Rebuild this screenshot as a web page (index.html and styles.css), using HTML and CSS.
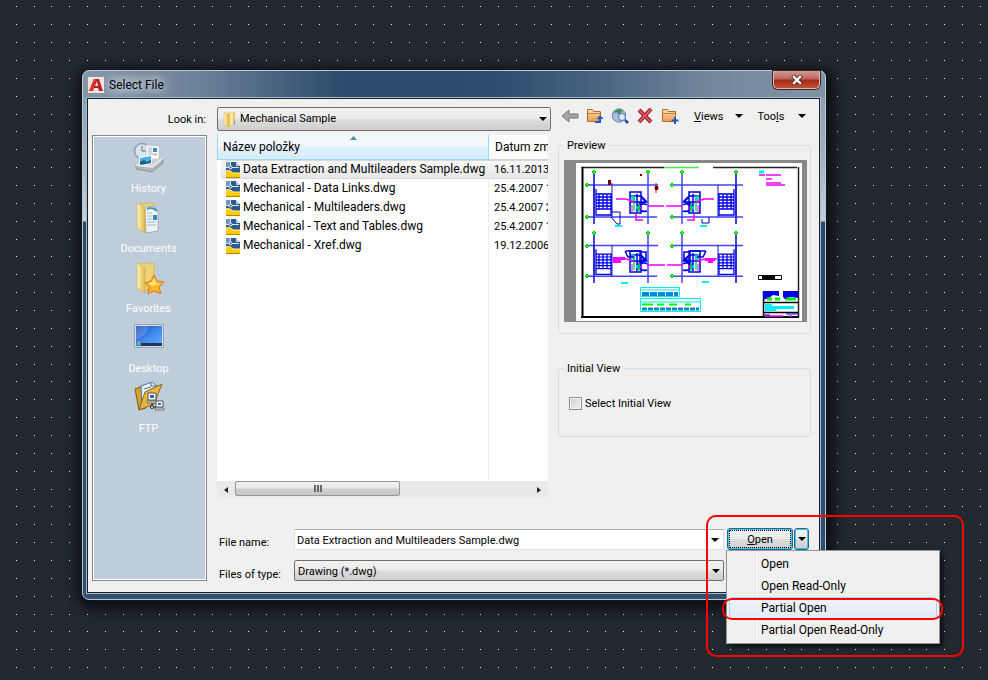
FILE: index.html
```
<!DOCTYPE html>
<html lang="en">
<head>
    <meta charset="UTF-8">
    <meta name="viewport" content="width=device-width, initial-scale=1.0">
    <title>Select File</title>
    <link rel="stylesheet" href="styles.css">
</head>
<body>
    <!-- Shared icons and drawing blocks -->
    <svg class="defs" aria-hidden="true">
        <defs>
            <linearGradient id="gold" x1="0" y1="0" x2="1" y2="0"><stop offset="0" stop-color="#fff6b8"/><stop offset="1" stop-color="#dfb64a"/></linearGradient>
            <linearGradient id="orange" x1="0" y1="0" x2="0" y2="1"><stop offset="0" stop-color="#ffe0b0"/><stop offset="1" stop-color="#ee9a4a"/></linearGradient>
            <linearGradient id="screen" x1="0" y1="0" x2="1" y2="1"><stop offset="0" stop-color="#1647b8"/><stop offset=".5" stop-color="#3f86ec"/><stop offset="1" stop-color="#5fa8fa"/></linearGradient>
            <symbol id="dwg" viewBox="0 0 14 16">
                <path d="M0 0h10l4 4v12H0z" fill="#2f5a8a"/>
                <path d="M0 0h4v5H0z" fill="#6f97bf"/>
                <path d="M10 0h4v4z" fill="#fff"/>
                <path d="M10 0v4h4z" fill="#b9d0e6"/>
                <path d="M4.500 0v4M0 5.500h3M6 5.500h7" stroke="#dbe8f4"/>
                <circle cx="4.500" cy="5.500" r="1.500" fill="#2f5a8a" stroke="#fff"/>
                <path d="M0 9c3-1 5 0 7 2h7v5H0z" fill="#fc0"/>
                <path d="M0 9c3-1 5 0 7 2h7" fill="none" stroke="#fff3b0"/>
                <path d="M0 15.500h14" stroke="#b58400"/>
            </symbol>
            <symbol id="folder" viewBox="0 0 18 16">
                <path d="M1.500 13.500v-12h5l1 2h7v10z" fill="url(#orange)" stroke="#b06a28"/>
                <path d="M2 5.500h12" stroke="#c98544"/>
            </symbol>
            <symbol id="bigfolder" viewBox="0 0 32 32">
                <path d="M5 2l16-1v25l-12 3z" fill="#edd27c" stroke="#cfa94b" stroke-width=".6"/>
            </symbol>
            <symbol id="bigfolderfront" viewBox="0 0 32 32">
                <path d="M4 1l8 5v25l-8-5z" fill="url(#gold)" stroke="#d0ac50" stroke-width=".6"/>
            </symbol>
            <g id="frame">
                <path d="M13 0v52M67 0v52M6 13h71M6 45h70" stroke="#4444ff" stroke-width="1.500"/>
                <path d="M13 2v50M13 13v31M31 13v32" stroke="#1111c8" stroke-width="1"/>
                <path d="M15 22h16M15 25h16M15 28h16M15 31h16M15 34h16M15 37h16M18 22v15M22 22v15M26 22v15M30 22v22M15 17v26h15" fill="none" stroke="#0000e8" stroke-width="1.300"/>
                <path d="M13-2l2 2-2 2-2-2zM67-2l2 2-2 2-2-2z" fill="#2f2" stroke="#0c0"/>
            </g>
            <g id="core">
                <path d="M49 20h11v21H49zM49 30h16M60 24l6 6M49 24h10l6 6c-7 0-8 3-8 5s4 5 8 4M56 22v18M66 30c-7 0-8 3-8 5 2-3 5-4 8-2M58 36c2 4 5 4 8 3" fill="none" stroke="#0000e0" stroke-width="1.500"/>
                <path d="M51 23v6M53 31v8M58 32v8" stroke="#0e4" stroke-width="1.500"/>
                <path d="M53 24v5M56 34v3" stroke="#00c8d8" stroke-width="2"/>
                <path d="M51 33v7M60 34v4" stroke="#f0f"/>
            </g>
            <path id="sidemarks" d="M2-2l2 2-2 2-2-2z" fill="#2f2" stroke="#0c0"/>
        </defs>
    </svg>

    <div class="dialog">
        <div class="titlebar">
            <svg class="logo" viewBox="0 0 16 16" aria-hidden="true">
                <rect width="16" height="16" fill="#fbe3dc"/>
                <path d="M1 14L6 2h5l4 12h-4l-1-3H6l-1 3z" fill="#b71f24"/>
                <path d="M7 9l2-5 1 5z" fill="#fbe3dc"/>
                <path d="M1 14L6 2h2L5 14z" fill="#dc3a36"/>
            </svg>
            <span class="title">Select File</span>
            <button class="close" aria-label="Close">
                <svg width="12" height="10" viewBox="0 0 12 10"><path d="M3 2l6 6M9 2L3 8" stroke="#4a2a30" stroke-width="4" stroke-linecap="square"/><path d="M3 2l6 6M9 2L3 8" stroke="#fff" stroke-width="2.400" stroke-linecap="square"/></svg>
            </button>
        </div>

        <div class="client">
            <label class="look-label" for="lookin">Look in:</label>
            <div class="look-box">
                <svg class="look-icon" viewBox="0 0 14 16" aria-hidden="true"><path d="M4 2l8-1v12l-6 2z" fill="#e9c966"/><path d="M1 1l5 2v13l-5-2z" fill="url(#gold)" stroke="#d5b65f" stroke-width=".5"/><path d="M7 2h3v11l-3 1z" fill="#f8e7a0"/><path d="M11 10h1v4h-1z" fill="#4fa9d8"/></svg>
                <select class="combo" id="lookin"><option>Mechanical Sample</option></select>
            </div>
            <div class="toolbar">
                <button class="tool" aria-label="Back"><svg viewBox="0 0 18 16"><path d="M1 8l7-6v4h9v4H8v4z" fill="#a5a5a5" stroke="#777"/></svg></button>
                <button class="tool" aria-label="Up one level"><svg viewBox="0 0 18 16"><use href="#folder"/><path d="M9 14h5V9" fill="none" stroke="#2456c4" stroke-width="2"/><path d="M10.500 11L14 7l3.500 4z" fill="#2456c4"/></svg></button>
                <button class="tool" aria-label="Search the Web"><svg viewBox="0 0 18 16"><circle cx="8" cy="7.500" r="6.700" fill="#a9bce6" stroke="#6c83b8"/><path d="M3 4c2-3 7-4 9-1l-2 1 1 2-2-1-2 2-1-3-2 1z" fill="#458c5a"/><circle cx="11" cy="9" r="3.500" fill="#dceafa" stroke="#58719f"/><path d="M14 12l3 3" stroke="#1c459e" stroke-width="2.500"/></svg></button>
                <button class="tool" aria-label="Delete"><svg viewBox="0 0 18 16"><path d="M3 2l12 12M15 1L3 14" stroke="#8d1824" stroke-width="4"/><path d="M3 2l12 12M15 1L3 14" stroke="#dc5860" stroke-width="2"/></svg></button>
                <button class="tool" aria-label="Create new folder"><svg viewBox="0 0 18 16"><use href="#folder"/><path d="M14 9v7M10.500 12.500h7" stroke="#2456c4" stroke-width="2"/></svg></button>
                <button class="menu-btn"><span><u>V</u>iews</span><i class="arrow"></i></button>
                <button class="menu-btn"><span>Too<u>l</u>s</span><i class="arrow"></i></button>
            </div>

            <nav class="places">
                <button class="place">
                    <svg viewBox="0 0 32 32" aria-hidden="true"><circle cx="9" cy="9" r="7.500" fill="#d8e3ec" stroke="#8ea0b0" stroke-width="1.500"/><path d="M9 4v5h4" fill="none" stroke="#617487"/><path d="M13 3l13 1v17H13z" fill="#fff" stroke="#b5bec7" stroke-width=".7"/><path d="M15 6h4M15 8h4M15 10h4M15 12h9M21 13h3" stroke="#a6b1bc"/><path d="M20 6h4v4h-4z" fill="#3b91b4"/><path d="M3 23l7-6 20-1v5l-11 9z" fill="#ccd0d3"/><path d="M6 15l13-2v9l-13 2z" fill="#fff"/><path d="M7 16l11-2v7L7 23z" fill="#4bb0e8"/><path d="M7 20l4-2 3 2 4-2v3L7 23z" fill="#1c5f82"/><path d="M3 23l16 2 11-9v5l-11 9-16-3z" fill="#b3b7ba" stroke="#777d82" stroke-width=".7"/><path d="M3 23l16 2 11-9" fill="none" stroke="#f5f5f5" stroke-width="1.500"/></svg>
                    <span>History</span>
                </button>
                <button class="place">
                    <svg viewBox="0 0 32 32" aria-hidden="true"><use href="#bigfolder"/><path d="M12 5l8-1 5 5v20l-12 2z" fill="#eef3f8" stroke="#8b98a8" stroke-width=".7"/><path d="M14 7c4-2 7-1 10 2" stroke="#4f99b0" stroke-width="2" fill="none"/><path d="M14 11h5M14 14h5M14 17h5M14 20h9M14 23h9" stroke="#a8b4c2"/><path d="M20 13h4v5h-4z" fill="#358eb5"/><use href="#bigfolderfront"/></svg>
                    <span>Documents</span>
                </button>
                <button class="place">
                    <svg viewBox="0 0 32 32" aria-hidden="true"><use href="#bigfolder"/><use href="#bigfolderfront"/><path d="M21 13l3 6 7 1-5 5 2 7-7-3-6 3 1-7-4-4 6-2z" fill="#fdb52f" stroke="#d67b15"/><path d="M21 16l2 5 4 1-8 2-4-3 4-1z" fill="#ffe474"/></svg>
                    <span>Favorites</span>
                </button>
                <button class="place">
                    <svg viewBox="0 0 32 32" aria-hidden="true"><path d="M1.500 2.500h29v23h-29z" fill="#d9dce6" stroke="#9aa1b4"/><path d="M3 4h26v18H3z" fill="url(#screen)"/><path d="M3 4h12c0 6-4 10-12 13z" fill="#fff" opacity=".18"/><path d="M3 21h26v3H3z" fill="#24375a"/><circle cx="5.500" cy="22" r="2.500" fill="#32a9c9"/><path d="M5 20h2v2H5z" fill="#f58d36"/></svg>
                    <span>Desktop</span>
                </button>
                <button class="place">
                    <svg viewBox="0 0 32 32" aria-hidden="true"><path d="M2 7l8-3 3 1v21l-7 2z" fill="#d4a02d" stroke="#7e5c17"/><path d="M8 4l11-4 4 3v16L9 24z" fill="#e7f2fb" stroke="#4f718e"/><path d="M18 0v4h5M11 7l7-2" fill="none" stroke="#4f718e"/><path d="M6 28l6-18 17-8-8 20z" fill="#e3b646" stroke="#8a671c"/><path d="M15 11h8v7h-8zM23 19h7v6h-7z" fill="#fff" stroke="#555"/><path d="M17 13h4v3h-4zM25 21h3v2h-3z" fill="#2f65b8"/><path d="M14 19h9v2h-9zM22 26h9v2h-9z" fill="#d8d8d8" stroke="#555" stroke-width=".7"/><path d="M19 21v6M17 25h6" stroke="#222"/><circle cx="19" cy="25" r="1.500" fill="#fff" stroke="#222"/></svg>
                    <span>FTP</span>
                </button>
            </nav>

            <div class="files">
                <div class="list">
                    <table>
                        <thead>
                            <tr><th class="sorted">Název položky</th><th>Datum zm</th></tr>
                        </thead>
                        <tbody>
                            <tr class="selected"><td><svg class="dwg"><use href="#dwg"/></svg>Data Extraction and Multileaders Sample.dwg</td><td>16.11.2013</td></tr>
                            <tr><td><svg class="dwg"><use href="#dwg"/></svg>Mechanical - Data Links.dwg</td><td>25.4.2007 1</td></tr>
                            <tr><td><svg class="dwg"><use href="#dwg"/></svg>Mechanical - Multileaders.dwg</td><td>25.4.2007 2</td></tr>
                            <tr><td><svg class="dwg"><use href="#dwg"/></svg>Mechanical - Text and Tables.dwg</td><td>25.4.2007 1</td></tr>
                            <tr><td><svg class="dwg"><use href="#dwg"/></svg>Mechanical - Xref.dwg</td><td>19.12.2006</td></tr>
                        </tbody>
                    </table>
                </div>
                <div class="scrollbar">
                    <button class="scroll-end" aria-label="Scroll left"><i class="tri left"></i></button>
                    <div class="track"><div class="thumb"><i class="grip"></i></div></div>
                    <button class="scroll-end" aria-label="Scroll right"><i class="tri right"></i></button>
                </div>
            </div>

            <div class="side">
                <fieldset class="preview">
                    <legend>Preview</legend>
                    <svg class="drawing" viewBox="0 0 243 162" fill="none">
                        <rect width="243" height="162" fill="#888"/>
                        <rect x="12" y="3" width="226" height="158" fill="#fff"/>
                        <path d="M17.500 7.500h83M149 7.500h84M234.500 7v150" stroke="#222" stroke-width="1.500"/>
                        <path d="M18.500 7v150M17 157h218" stroke="#000" stroke-width="2"/>
                        <path d="M100 7.500h35" stroke="#4e4" stroke-width="1.500"/>
                        <!-- upper floor plans -->
                        <g transform="translate(17 12)"><use href="#frame"/><use href="#core"/><use href="#sidemarks" transform="translate(4 13)"/><use href="#sidemarks" transform="translate(4 45)"/><path d="M35 27h10l8 3M67 34h16M55 42v6h7" stroke="#f0f" stroke-width="1.500"/><path d="M30 40h9v12h-3l-6-7" stroke="#00c"/><path d="M34 54h7" stroke="#0ee" stroke-width="2"/><path d="M28 12h4M75 11v10M73 16h5" stroke="#d00"/><path d="M27 8h3v5h-3zM59 2h2v2h-2zM74 14h3v4h-3z" fill="#600"/></g>
                        <g transform="translate(185 12) scale(-1 1)"><use href="#frame"/><use href="#core"/><use href="#sidemarks" transform="translate(75 13)"/><use href="#sidemarks" transform="translate(75 45)"/><path d="M35 27h10l8 3M67 34h16M55 42v6h7" stroke="#f0f" stroke-width="1.500"/><path d="M40 45v6h7v-4" stroke="#00c"/><path d="M42 54h7" stroke="#0ee" stroke-width="2"/></g>
                        <!-- lower floor plans -->
                        <g transform="translate(17 75)"><use href="#frame" transform="translate(0 -2) scale(1 .96)"/><use href="#core" transform="translate(0 -4)"/><use href="#sidemarks" transform="translate(4 11)"/><use href="#sidemarks" transform="translate(4 41)"/><path d="M45 16h14v8M44 16l3 6h6M60 17h5v8h-7" stroke="#00d" stroke-width="1.500"/><path d="M32 22h12v3h-4v3h-8z" fill="#f0f"/><path d="M42 23l10 3M66 30h18" stroke="#f0f" stroke-width="1.500"/><path d="M40 48h7" stroke="#0ee" stroke-width="2"/></g>
                        <g transform="translate(185 75) scale(-1 1)"><use href="#frame" transform="translate(0 -2) scale(1 .96)"/><use href="#core" transform="translate(0 -4)"/><use href="#sidemarks" transform="translate(75 11)"/><use href="#sidemarks" transform="translate(75 41)"/><path d="M43 16h16v8M43 16l3 6h6M60 17h5v8h-7" stroke="#00d" stroke-width="1.500"/><path d="M34 23h10v3h-3v2h-5v-2h-2z" fill="#f0f"/><path d="M44 24l8 2M66 30h16M32 24h4" stroke="#f0f" stroke-width="1.500"/><path d="M40 47h7" stroke="#0ee" stroke-width="2"/></g>
                        <!-- schedules and title block -->
                        <path d="M76.500 127.500h39v9h-39zM76.500 138.500h60v13h-60zM76 130h39M76 142h60" stroke="#0ee"/>
                        <path d="M78 134h36" stroke="#08d" stroke-width="4" stroke-dasharray="7 1"/>
                        <path d="M78 149h57" stroke="#08c" stroke-width="3" stroke-dasharray="5 1"/>
                        <path d="M78 144.500h11M93 144.500h7M105 144.500h8M121 144.500h6" stroke="#0f0" stroke-width="2"/>
                        <path d="M195 12h5" stroke="#0ee" stroke-width="3"/>
                        <path d="M195 15h6M202 15h15M202 19h6M202 23h15M202 25h19" stroke="#f0f" stroke-width="1.500"/>
                        <path d="M194.500 115.500h23v4h-23z" stroke="#000"/>
                        <path d="M198 115h13v5h-13z" fill="#000"/>
                        <path d="M199.500 131v26M199 142.500h35M199 152.500h35" stroke="#000" stroke-width="1.500"/>
                        <path d="M199 131h16v5l-6-1-4 3-6 2zM219 131h15v7l-8-1-4 3-3-3z" fill="#0000e8"/>
                        <path d="M203 139h5M211 139h5M222 139h10" stroke="#0e0" stroke-width="3"/>
                        <path d="M201 144h7v2h22v3h-18v2h-11z" fill="#0ef"/>
                        <path d="M201 156h18M225 156h3" stroke="#f0f" stroke-width="1.500"/>
                        <path d="M200 155h6M222 154h12" stroke="#00d"/>
                    </svg>
                </fieldset>
                <fieldset class="initial">
                    <legend>Initial View</legend>
                    <label class="check"><input type="checkbox">Select Initial View</label>
                </fieldset>
            </div>

            <div class="form">
                <label for="fname">File name:</label>
                <div class="name-box">
                    <input type="text" id="fname" value="Data Extraction and Multileaders Sample.dwg">
                    <button class="name-drop" aria-label="Show recent names"><i class="arrow"></i></button>
                </div>
                <div class="open-group">
                    <button class="open"><span><u>O</u>pen</span></button>
                    <button class="open-drop" aria-label="Open options"><i class="arrow"></i></button>
                    <div class="menu">
                        <button>Open</button>
                        <button>Open Read-Only</button>
                        <button class="active">Partial Open</button>
                        <button>Partial Open Read-Only</button>
                    </div>
                    <div class="mark mark-area"></div>
                    <div class="mark mark-item"></div>
                </div>
                <label for="ftype">Files of type:</label>
                <select class="combo" id="ftype"><option>Drawing (*.dwg)</option></select>
            </div>
        </div>
    </div>
</body>
</html>
```
FILE: styles.css
```
* {
    box-sizing: border-box;
}
body {
    margin: 0;
    padding: 70px 162px 80px 82px;
    min-height: 100vh;
    font-family: Roboto, "Liberation Sans", Arial, sans-serif;
    font-size: 11px;
    color: #000;
    background-color: #212830;
    /* grid dots, seven per 125px tile */
    background-image: url("data:image/svg+xml,%3Csvg xmlns='http://www.w3.org/2000/svg' width='125' height='125'%3E%3Cpath d='M0 .5h125M0 18.5h125M0 36.5h125M0 54.5h125M0 72.5h125M0 90.5h125M0 108.5h125' stroke='%23ffff80' stroke-dasharray='1 17 1 17 1 17 1 17 1 17 1 17 1 16'/%3E%3C/svg%3E");
    background-position: 51px 6px;
}
button, input, select {
    font: inherit;
    color: inherit;
    margin: 0;
    padding: 0;
}
button {
    border: 0;
    background: none;
}
.defs {
    position: absolute;
    width: 0;
    height: 0;
}
.arrow {
    border: 4px solid transparent;
    border-top-color: #000;
    border-bottom: 0;
}

/* Window */
.dialog {
    padding: 0 5px 6px 4px;
    border: 1px solid #b9c8d6;
    border-radius: 7px;
    background:
        linear-gradient(90deg, #8496a8 0, #6c8299 15%, #2d4a6c 35%, #2c4b6e 55%, #4a6582 70%, #74889c 85%, #8293a5 100%) 0 0 / 100% 27px no-repeat,
        linear-gradient(#8496a8 0, #a3b3c2 90px, #c4d0dc 150px, #2a4868 151px, #31506f 100%);
    box-shadow: 0 0 0 1px #10161d, 2px 4px 14px 5px rgba(0, 0, 0, 0.7);
}
.titlebar {
    display: flex;
    align-items: center;
    height: 27px;
}
.logo {
    width: 16px;
    height: 16px;
    margin-left: 1px;
}
.title {
    flex: 1;
    margin-left: 5px;
    font-size: 12px;
    text-shadow: 0 0 8px #dfe7ee, 0 0 12px #dfe7ee, 0 0 16px #dfe7ee;
}
.close {
    align-self: flex-start;
    display: flex;
    justify-content: center;
    align-items: center;
    width: 47px;
    height: 18px;
    border: 1px solid #e0b8b4;
    border-top: 0;
    border-radius: 0 0 5px 5px;
    background: linear-gradient(#cf9c94 0, #bd6457 48%, #a32a18 52%, #c2502f 100%);
    box-shadow: 0 0 0 1px #43232a;
}
.client {
    display: grid;
    grid-template-columns: 115px 1fr 253px;
    grid-template-rows: 36px 362px auto;
    border: 1px solid #18222c;
    outline: 1px solid #a9bacb;
    background: #f0f0f0;
    padding: 0 8px 11px 4px;
}

/* Top row */
.look-label {
    align-self: center;
    justify-self: end;
    padding: 4px 1px 0 0;
}
.look-box {
    position: relative;
    margin: 8px 7px 0 10px;
}
.look-icon {
    position: absolute;
    left: 6px;
    top: 4px;
    width: 14px;
    height: 16px;
}
.combo {
    appearance: none;
    width: 100%;
    height: 21px;
    padding: 0 20px 0 3px;
    border: 1px solid #707070;
    border-radius: 2px;
    background:
        url("data:image/svg+xml,%3Csvg xmlns='http://www.w3.org/2000/svg' width='8' height='4'%3E%3Cpath d='M0 0h8L4 4z'/%3E%3C/svg%3E") right 3px center no-repeat,
        linear-gradient(#f2f2f2 0, #ebebeb 49%, #ddd 51%, #cfcfcf 100%);
}
.look-box .combo {
    height: 24px;
    padding: 0 20px 2px 22px;
}
.toolbar {
    display: flex;
    align-items: center;
    gap: 7px;
    padding: 0 5px 2px 3px;
}
.tool, .tool svg {
    display: block;
    width: 18px;
    height: 16px;
}
.menu-btn {
    flex: 1;
    display: flex;
    justify-content: space-between;
    align-items: center;
    padding-left: 8px;
}

/* Places bar */
.places {
    grid-row: 2 / 4;
    display: flex;
    flex-direction: column;
    border: 1px solid #828790;
    outline: 1px solid #fff;
    outline-offset: -2px;
    background: #bfccda;
    padding-top: 6px;
}
.place {
    display: flex;
    flex-direction: column;
    align-items: center;
    gap: 8px;
    height: 60px;
    padding: 0 2px 0 0;
    color: #fff;
}
.place svg {
    width: 32px;
    height: 32px;
}

/* File list */
.files {
    display: flex;
    flex-direction: column;
    margin: 0 10px 0 10px;
}
.list {
    flex: 1;
    overflow: hidden;
    background: linear-gradient(90deg, transparent 271px, #e3edf4 271px, #e3edf4 272px, transparent 272px) #fff;
}
table {
    width: 100%;
    table-layout: fixed;
    border-collapse: separate;
    border-spacing: 0;
    font-size: 12px;
    line-height: 17px;
    white-space: nowrap;
}
th {
    height: 25px;
    padding: 1px 0 0 6px;
    border-bottom: 1px solid #d5d5d5;
    font-weight: normal;
    text-align: left;
    background: #fcfcfc;
}
th.sorted {
    width: 272px;
    padding-left: 5px;
    border: 1px solid #96d9f9;
    border-top: 0;
    background:
        url("data:image/svg+xml,%3Csvg xmlns='http://www.w3.org/2000/svg' width='7' height='4'%3E%3Cpath d='M0 4h7L3.5 0z' fill='%23568aa8'/%3E%3C/svg%3E") center 1px no-repeat,
        linear-gradient(#f2f9fc 0, #f2f9fc 45%, #e1f1f9 50%, #d8ecf6 100%);
}
td {
    height: 19px;
    padding: 0 0 0 5px;
}
td:first-child {
    border-left: 4px solid transparent;
}
td:last-child {
    font-size: 11px;
}
.selected td {
    background: linear-gradient(#fafafa, #e6e6e6) padding-box;
    box-shadow: inset 0 1px #d9d9d9, inset 0 -1px #d9d9d9;
}
.selected td:first-child {
    border-radius: 6px 0 0 6px;
}
.dwg {
    width: 14px;
    height: 16px;
    margin-right: 3px;
    vertical-align: middle;
}
.scrollbar {
    display: flex;
    height: 16px;
    background: #e9e9e9;
}
.scroll-end {
    width: 18px;
}
.tri {
    display: inline-block;
    border: 3px solid transparent;
}
.tri.left {
    border-right: 4px solid #222;
    border-left: 0;
}
.tri.right {
    border-left: 4px solid #222;
    border-right: 0;
}
.track {
    flex: 1;
}
.thumb {
    display: flex;
    justify-content: center;
    align-items: center;
    width: 56%;
    height: 15px;
    border: 1px solid #979797;
    border-radius: 2px;
    background: linear-gradient(#f3f3f3 0, #e6e6e6 48%, #d0d0d0 52%, #c6c6c8 100%);
}
.grip {
    width: 8px;
    height: 7px;
    background: repeating-linear-gradient(90deg, #666 0, #666 2px, transparent 2px, transparent 3px);
}

/* Preview and initial view */
.side {
    padding-top: 4px;
}
fieldset {
    margin: 0;
    padding: 0 3px 0 5px;
    border: 1px solid #d5dfe5;
    border-radius: 3px;
    min-width: 0;
}
legend {
    padding: 0 3px;
    line-height: 13px;
}
.preview {
    height: 195px;
}
.drawing {
    display: block;
    width: 100%;
    margin-top: 8px;
}
.initial {
    height: 75px;
    margin-top: 28px;
}
.check {
    display: flex;
    align-items: center;
    gap: 3px;
    margin: 22px 0 0 5px;
}
.check input {
    appearance: none;
    width: 13px;
    height: 13px;
    border: 1px solid #8e8f8f;
    background: linear-gradient(135deg, #cbcfd5, #f6f6f6);
    box-shadow: inset 0 0 0 1px #f4f4f4;
}

/* File name, type, open */
.form {
    grid-column: 2 / 4;
    display: grid;
    grid-template-columns: 75px 1fr 87px;
    grid-template-rows: 32px 21px;
    margin: 31px 0 0 12px;
}
.form label {
    padding-top: 8px;
    line-height: 13px;
}
.form .combo {
    padding-top: 2px;
}
.name-box {
    display: flex;
    height: 21px;
    margin-top: 1px;
    border: 1px solid #e2e3ea;
    border-top-color: #abadb3;
    background: #fff;
}
.name-box input {
    flex: 1;
    border: 0;
    padding: 1px 0 0 2px;
    background: none;
}
.name-drop {
    display: flex;
    justify-content: center;
    align-items: center;
    width: 17px;
}
.open-group {
    position: relative;
    display: flex;
    gap: 1px;
    height: 22px;
    margin-left: 3px;
}
.open, .open-drop {
    display: flex;
    justify-content: center;
    align-items: center;
    border: 1px solid #2c628b;
    border-radius: 3px;
    background: linear-gradient(#f2f2f2 0, #ebebeb 49%, #ddd 51%, #cfcfcf 100%);
    box-shadow: inset 0 0 0 1px #3fc4f0;
}
.open {
    width: 66px;
    outline: 1px dotted #000;
    outline-offset: -3px;
}
.open-drop {
    width: 15px;
}
.menu {
    position: absolute;
    left: -1px;
    top: 22px;
    width: 214px;
    padding: 2px;
    border: 1px solid #979797;
    background: linear-gradient(90deg, transparent 28px, #e2e3e3 28px, #e2e3e3 29px, #fff 29px, #fff 30px, transparent 30px) #f0f0f0;
    box-shadow: 3px 3px 4px rgba(0, 0, 0, 0.6);
    font-size: 12px;
}
.menu button {
    display: block;
    width: 100%;
    height: 22px;
    padding-left: 32px;
    text-align: left;
}
.menu .active {
    border: 1px solid #aecff7;
    border-radius: 3px;
    padding-left: 31px;
    background: linear-gradient(#f0f3f8, #e3ebf7);
}

/* Red callouts */
.mark {
    position: absolute;
    border: 2px solid #f00;
    pointer-events: none;
}
.mark-area {
    left: -21px;
    top: -13px;
    width: 258px;
    height: 142px;
    border-radius: 10px;
}
.mark-item {
    left: -5px;
    top: 70px;
    width: 221px;
    height: 22px;
    border-radius: 10px;
}
```
